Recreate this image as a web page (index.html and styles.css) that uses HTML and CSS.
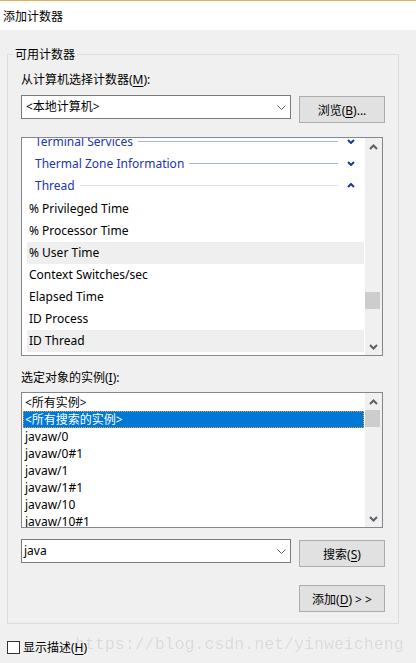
FILE: index.html
```html
<!DOCTYPE html>
<html lang="zh-CN">
<head>
    <meta charset="UTF-8">
    <meta name="viewport" content="width=device-width, initial-scale=1.0">
    <title>添加计数器</title>
    <link rel="stylesheet" href="styles.css">
</head>
<body>

<div class="titlebar">添加计数器</div>

<fieldset class="group">
    <legend>可用计数器</legend>

    <div class="label first">从计算机选择计数器(<u>M</u>):</div>
    <div class="row">
        <div class="combo">
            <span>&lt;本地计算机&gt;</span>
            <svg class="combo-arrow" width="9" height="5" viewBox="0 0 9 5"><polyline points="0.5,0.5 4.5,4.5 8.5,0.5" fill="none" stroke="#606060" stroke-width="1"/></svg>
        </div>
        <button class="btn">浏览(<u>B</u>)...</button>
    </div>

    <!-- 计数器列表 -->
    <div class="listbox counters">
        <div class="items">
            <div class="scroller">
                <div class="cat">
                    <span>Terminal Services</span><i class="rule"></i>
                    <svg width="8" height="5" viewBox="0 0 8 5"><polyline points="1,1 4,4 7,1" fill="none" stroke="#1a3a9a" stroke-width="2"/></svg>
                </div>
                <div class="cat">
                    <span>Thermal Zone Information</span><i class="rule"></i>
                    <svg width="8" height="5" viewBox="0 0 8 5"><polyline points="1,1 4,4 7,1" fill="none" stroke="#1a3a9a" stroke-width="2"/></svg>
                </div>
                <div class="cat open">
                    <span>Thread</span><i class="rule"></i>
                    <svg width="8" height="5" viewBox="0 0 8 5"><polyline points="1,4 4,1 7,4" fill="none" stroke="#1a3a9a" stroke-width="2"/></svg>
                </div>
                <div class="item">% Privileged Time</div>
                <div class="item">% Processor Time</div>
                <div class="item hl">% User Time</div>
                <div class="item">Context Switches/sec</div>
                <div class="item">Elapsed Time</div>
                <div class="item">ID Process</div>
                <div class="item hl">ID Thread</div>
            </div>
        </div>
        <div class="vscroll">
            <div class="arrow">
                <svg width="9" height="6" viewBox="0 0 9 6"><polyline points="1,5 4.5,1.5 8,5" fill="none" stroke="#606060" stroke-width="2"/></svg>
            </div>
            <div class="track"><div class="thumb thumb-counters"></div></div>
            <div class="arrow">
                <svg width="9" height="6" viewBox="0 0 9 6"><polyline points="1,1 4.5,4.5 8,1" fill="none" stroke="#606060" stroke-width="2"/></svg>
            </div>
        </div>
    </div>

    <div class="label second">选定对象的实例(<u>I</u>):</div>

    <!-- 实例列表 -->
    <div class="listbox instances">
        <div class="items">
            <div class="inst">&lt;所有实例&gt;</div>
            <div class="inst sel">&lt;所有搜索的实例&gt;</div>
            <div class="inst">javaw/0</div>
            <div class="inst">javaw/0#1</div>
            <div class="inst">javaw/1</div>
            <div class="inst">javaw/1#1</div>
            <div class="inst">javaw/10</div>
            <div class="inst">javaw/10#1</div>
        </div>
        <div class="vscroll">
            <div class="arrow">
                <svg width="9" height="6" viewBox="0 0 9 6"><polyline points="1,5 4.5,1.5 8,5" fill="none" stroke="#606060" stroke-width="2"/></svg>
            </div>
            <div class="track"><div class="thumb"></div></div>
            <div class="arrow">
                <svg width="9" height="6" viewBox="0 0 9 6"><polyline points="1,1 4.5,4.5 8,1" fill="none" stroke="#606060" stroke-width="2"/></svg>
            </div>
        </div>
    </div>

    <div class="row search">
        <div class="combo">
            <span class="java">java</span>
            <svg class="combo-arrow" width="9" height="5" viewBox="0 0 9 5"><polyline points="0.5,0.5 4.5,4.5 8.5,0.5" fill="none" stroke="#606060" stroke-width="1"/></svg>
        </div>
        <button class="btn">搜索(<u>S</u>)</button>
    </div>

    <div class="row add">
        <button class="btn">添加(<u>D</u>) &gt; &gt;</button>
    </div>
</fieldset>

<div class="footer">
    <span class="checkbox"></span>
    <span>显示描述(<u>H</u>)</span>
</div>

<div class="watermark">https://blog.csdn.net/yinweicheng</div>

</body>
</html>
```

FILE: styles.css
```css
body {
    margin: 0;
    padding: 0;
    width: 416px;
    height: 663px;
    background-color: #f0f0f0;
    font-family: "Noto Sans", "Noto Sans CJK SC", sans-serif;
    font-size: 12px;
    color: #000;
    position: relative;
    overflow: hidden;
}
u {
    text-decoration-thickness: 1px;
    text-underline-offset: 2px;
}
.titlebar {
    height: 29px;
    line-height: 29px;
    border-top: 1px solid #e0b060;
    background-color: #fff;
    padding-left: 3px;
    font-family: "Noto Sans CJK SC", sans-serif;
}
.group {
    margin: 15px 17px 0 7px;
    padding: 0 13px 11px 13px;
    border: 1px solid #dcdcdc;
    min-width: 0;
}
.group legend {
    margin-left: -8px;
    padding: 0 2px;
    line-height: 18px;
    font-family: "Noto Sans CJK SC", sans-serif;
}
.label {
    line-height: 16px;
    height: 16px;
}
.label.first {
    margin-top: 9px;
}
.label.second {
    margin-top: 14px;
}
.row {
    display: flex;
    align-items: flex-start;
    gap: 8px;
}
.label.first + .row {
    margin-top: 7px;
}
.combo {
    width: 264px;
    height: 22px;
    border: 1px solid #7a7a7a;
    background-color: #fff;
    display: flex;
    align-items: center;
    justify-content: space-between;
    padding: 0 0 0 4px;
    box-sizing: content-box;
}
.combo span {
    line-height: 22px;
}
.combo .java {
    margin-left: -2px;
}
.combo-arrow {
    margin-right: 4px;
}
.btn {
    margin-top: 1px;
    width: 86px;
    height: 27px;
    padding: 0;
    background-color: #e1e1e1;
    border: 1px solid #adadad;
    font-family: "Noto Sans", "Noto Sans CJK SC", sans-serif;
    font-size: 12px;
    color: #000;
}
.listbox {
    width: 360px;
    border: 1px solid #828790;
    background-color: #fff;
    display: flex;
    overflow: hidden;
}
.listbox .items {
    flex: 1;
    overflow: hidden;
}
.counters {
    margin-top: 14px;
    height: 217px;
}
.counters .items {
    padding: 0 1px 0 5px;
}
.scroller {
    margin-top: -8px;
}
.cat {
    height: 22px;
    display: flex;
    align-items: center;
    padding: 0 9px 0 8px;
    color: #2035b0;
}
.cat.open {
    margin-bottom: 2px;
}
.cat .rule {
    flex: 1;
    height: 1px;
    margin: 1px 9px 0 5px;
    background-color: #a8b4e0;
}
.cat.open .rule {
    background-color: #dde0ec;
}
.item {
    height: 22px;
    line-height: 22px;
    padding-left: 2px;
}
.item.hl {
    background-color: #efefef;
}
.vscroll {
    width: 17px;
    background-color: #f0f0f0;
    display: flex;
    flex-direction: column;
}
.vscroll .arrow {
    height: 17px;
    display: flex;
    align-items: center;
    justify-content: center;
}
.vscroll .track {
    flex: 1;
}
.thumb {
    width: 15px;
    height: 17px;
    background-color: #cdcdcd;
}
.thumb-counters {
    margin-top: 137px;
}
.instances {
    margin-top: 6px;
    height: 134px;
}
.instances .items {
    padding: 1px 1px 0 1px;
}
.inst {
    height: 17px;
    line-height: 17px;
    padding-left: 2px;
}
.inst.sel {
    background-color: #0078d7;
    color: #fff;
    outline: 1px dotted #f0a030;
    outline-offset: -1px;
}
.row.search {
    margin-top: 11px;
}
.row.add {
    margin-top: 17px;
    justify-content: flex-end;
}
.footer {
    margin: 17px 0 0 7px;
    display: flex;
    align-items: center;
    gap: 3px;
    height: 13px;
}
.checkbox {
    width: 11px;
    height: 11px;
    border: 1px solid #333;
    background-color: #fff;
}
.footer span:last-child {
    line-height: 13px;
}
.watermark {
    position: absolute;
    left: 75px;
    top: 634px;
    font-family: "Liberation Mono", monospace;
    font-size: 16.6px;
    line-height: 22px;
    color: rgba(0, 0, 0, 0.1);
    white-space: nowrap;
}
```
